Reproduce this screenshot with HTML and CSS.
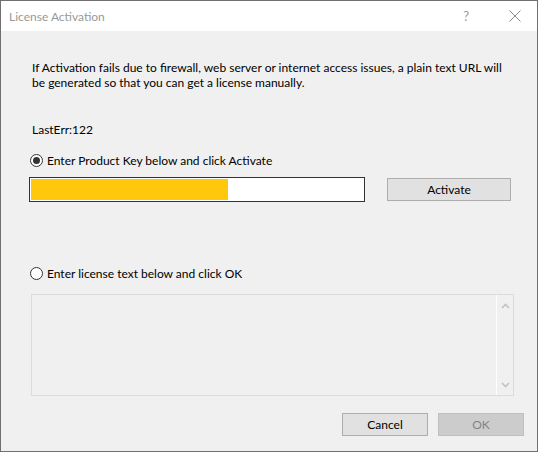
FILE: index.html
```html
<!DOCTYPE html>
<html>
<head>
<meta charset="utf-8">
<link rel="stylesheet" href="styles.css">
</head>
<body>
<div class="window">
  <div class="titlebar">
    <span class="title">License Activation</span>
    <div class="caption-buttons">
      <span class="help">?</span>
      <svg class="close" width="12" height="12" viewBox="0 0 12 12"><path d="M0.5 0.5 L11.5 11.5 M11.5 0.5 L0.5 11.5" stroke="#8c8c8c" stroke-width="1" fill="none"/></svg>
    </div>
  </div>
  <div class="content">
    <p class="info">If Activation fails due to firewall, web server or internet access issues, a plain text URL will be generated so that you can get a license manually.</p>
    <div class="lasterr">LastErr:122</div>
    <label class="radio-row first">
      <span class="radio checked"></span>
      <span>Enter Product Key below and click Activate</span>
    </label>
    <div class="key-row">
      <div class="keybox"><div class="keyfill"></div></div>
      <button class="btn activate">Activate</button>
    </div>
    <label class="radio-row second">
      <span class="radio"></span>
      <span>Enter license text below and click OK</span>
    </label>
    <div class="textarea">
      <div class="textarea-body"></div>
      <div class="scrollbar">
        <svg width="9" height="6" viewBox="0 0 9 6"><path d="M1 5 L4.5 1.5 L8 5" stroke="#c2c2c2" stroke-width="1.6" fill="none"/></svg>
        <svg width="9" height="6" viewBox="0 0 9 6"><path d="M1 1 L4.5 4.5 L8 1" stroke="#c2c2c2" stroke-width="1.6" fill="none"/></svg>
      </div>
    </div>
    <div class="footer">
      <button class="btn">Cancel</button>
      <button class="btn disabled">OK</button>
    </div>
  </div>
</div>
</body>
</html>
```
FILE: styles.css
```css
* { box-sizing: border-box; }
html, body { margin: 0; padding: 0; }
body {
  font-family: "Lato", "Noto Sans", sans-serif;
  font-size: 12px;
  color: #000;
  background: #fff;
}
.window {
  width: 538px;
  height: 452px;
  border: 1px solid #707070;
  display: flex;
  flex-direction: column;
  background: #f0f0f0;
}
.titlebar {
  height: 30px;
  background: #fff;
  display: flex;
  align-items: center;
  justify-content: space-between;
  padding: 0 0 0 8px;
}
.title {
  color: #999;
  font-size: 12px;
}
.caption-buttons {
  display: flex;
  align-items: center;
}
.help {
  color: #999;
  font-size: 13px;
  margin-right: 40px;
}
.close {
  margin-right: 16px;
}
.content {
  flex: 1;
  display: flex;
  flex-direction: column;
  padding: 0 13px 0 28px;
}
.info {
  margin: 29px 0 0 3px;
  line-height: 15px;
  width: 475px;
}
.lasterr {
  margin: 32px 0 0 3px;
  line-height: 15px;
}
.radio-row {
  display: flex;
  align-items: center;
  height: 15px;
  margin-left: 1px;
}
.radio-row.first { margin-top: 16px; }
.radio-row.second { margin-top: 64px; }
.radio {
  width: 13px;
  height: 13px;
  border: 1px solid #333;
  border-radius: 50%;
  background: #fff;
  margin-right: 4px;
  display: flex;
  align-items: center;
  justify-content: center;
}
.radio.checked::after {
  content: "";
  width: 7px;
  height: 7px;
  border-radius: 50%;
  background: #333;
}
.key-row {
  margin-top: 9px;
  display: flex;
  align-items: flex-start;
}
.keybox {
  width: 336px;
  height: 25px;
  border: 1px solid #333;
  background: #fff;
  padding: 1px;
}
.keyfill {
  width: 197px;
  height: 100%;
  background: #ffc80a;
}
.btn {
  font-family: inherit;
  font-size: 12px;
  color: #000;
  background: #e1e1e1;
  border: 1px solid #adadad;
  height: 23px;
  width: 86px;
  padding: 0;
}
.activate {
  margin-left: 22px;
  margin-top: 1px;
  width: 124px;
}
.textarea {
  margin: 13px 0 0 2px;
  width: 483px;
  height: 102px;
  border: 1px solid #dcdcdc;
  display: flex;
}
.textarea-body { flex: 1; }
.scrollbar {
  width: 17px;
  border-left: 1px solid #fdfdfd;
  display: flex;
  flex-direction: column;
  justify-content: space-between;
  align-items: center;
  padding: 8px 0 7px;
}
.footer {
  margin-top: 17px;
  display: flex;
  justify-content: flex-end;
  gap: 10px;
}
.btn.disabled {
  background: #cccccc;
  border-color: #bfbfbf;
  color: #838383;
}
```
